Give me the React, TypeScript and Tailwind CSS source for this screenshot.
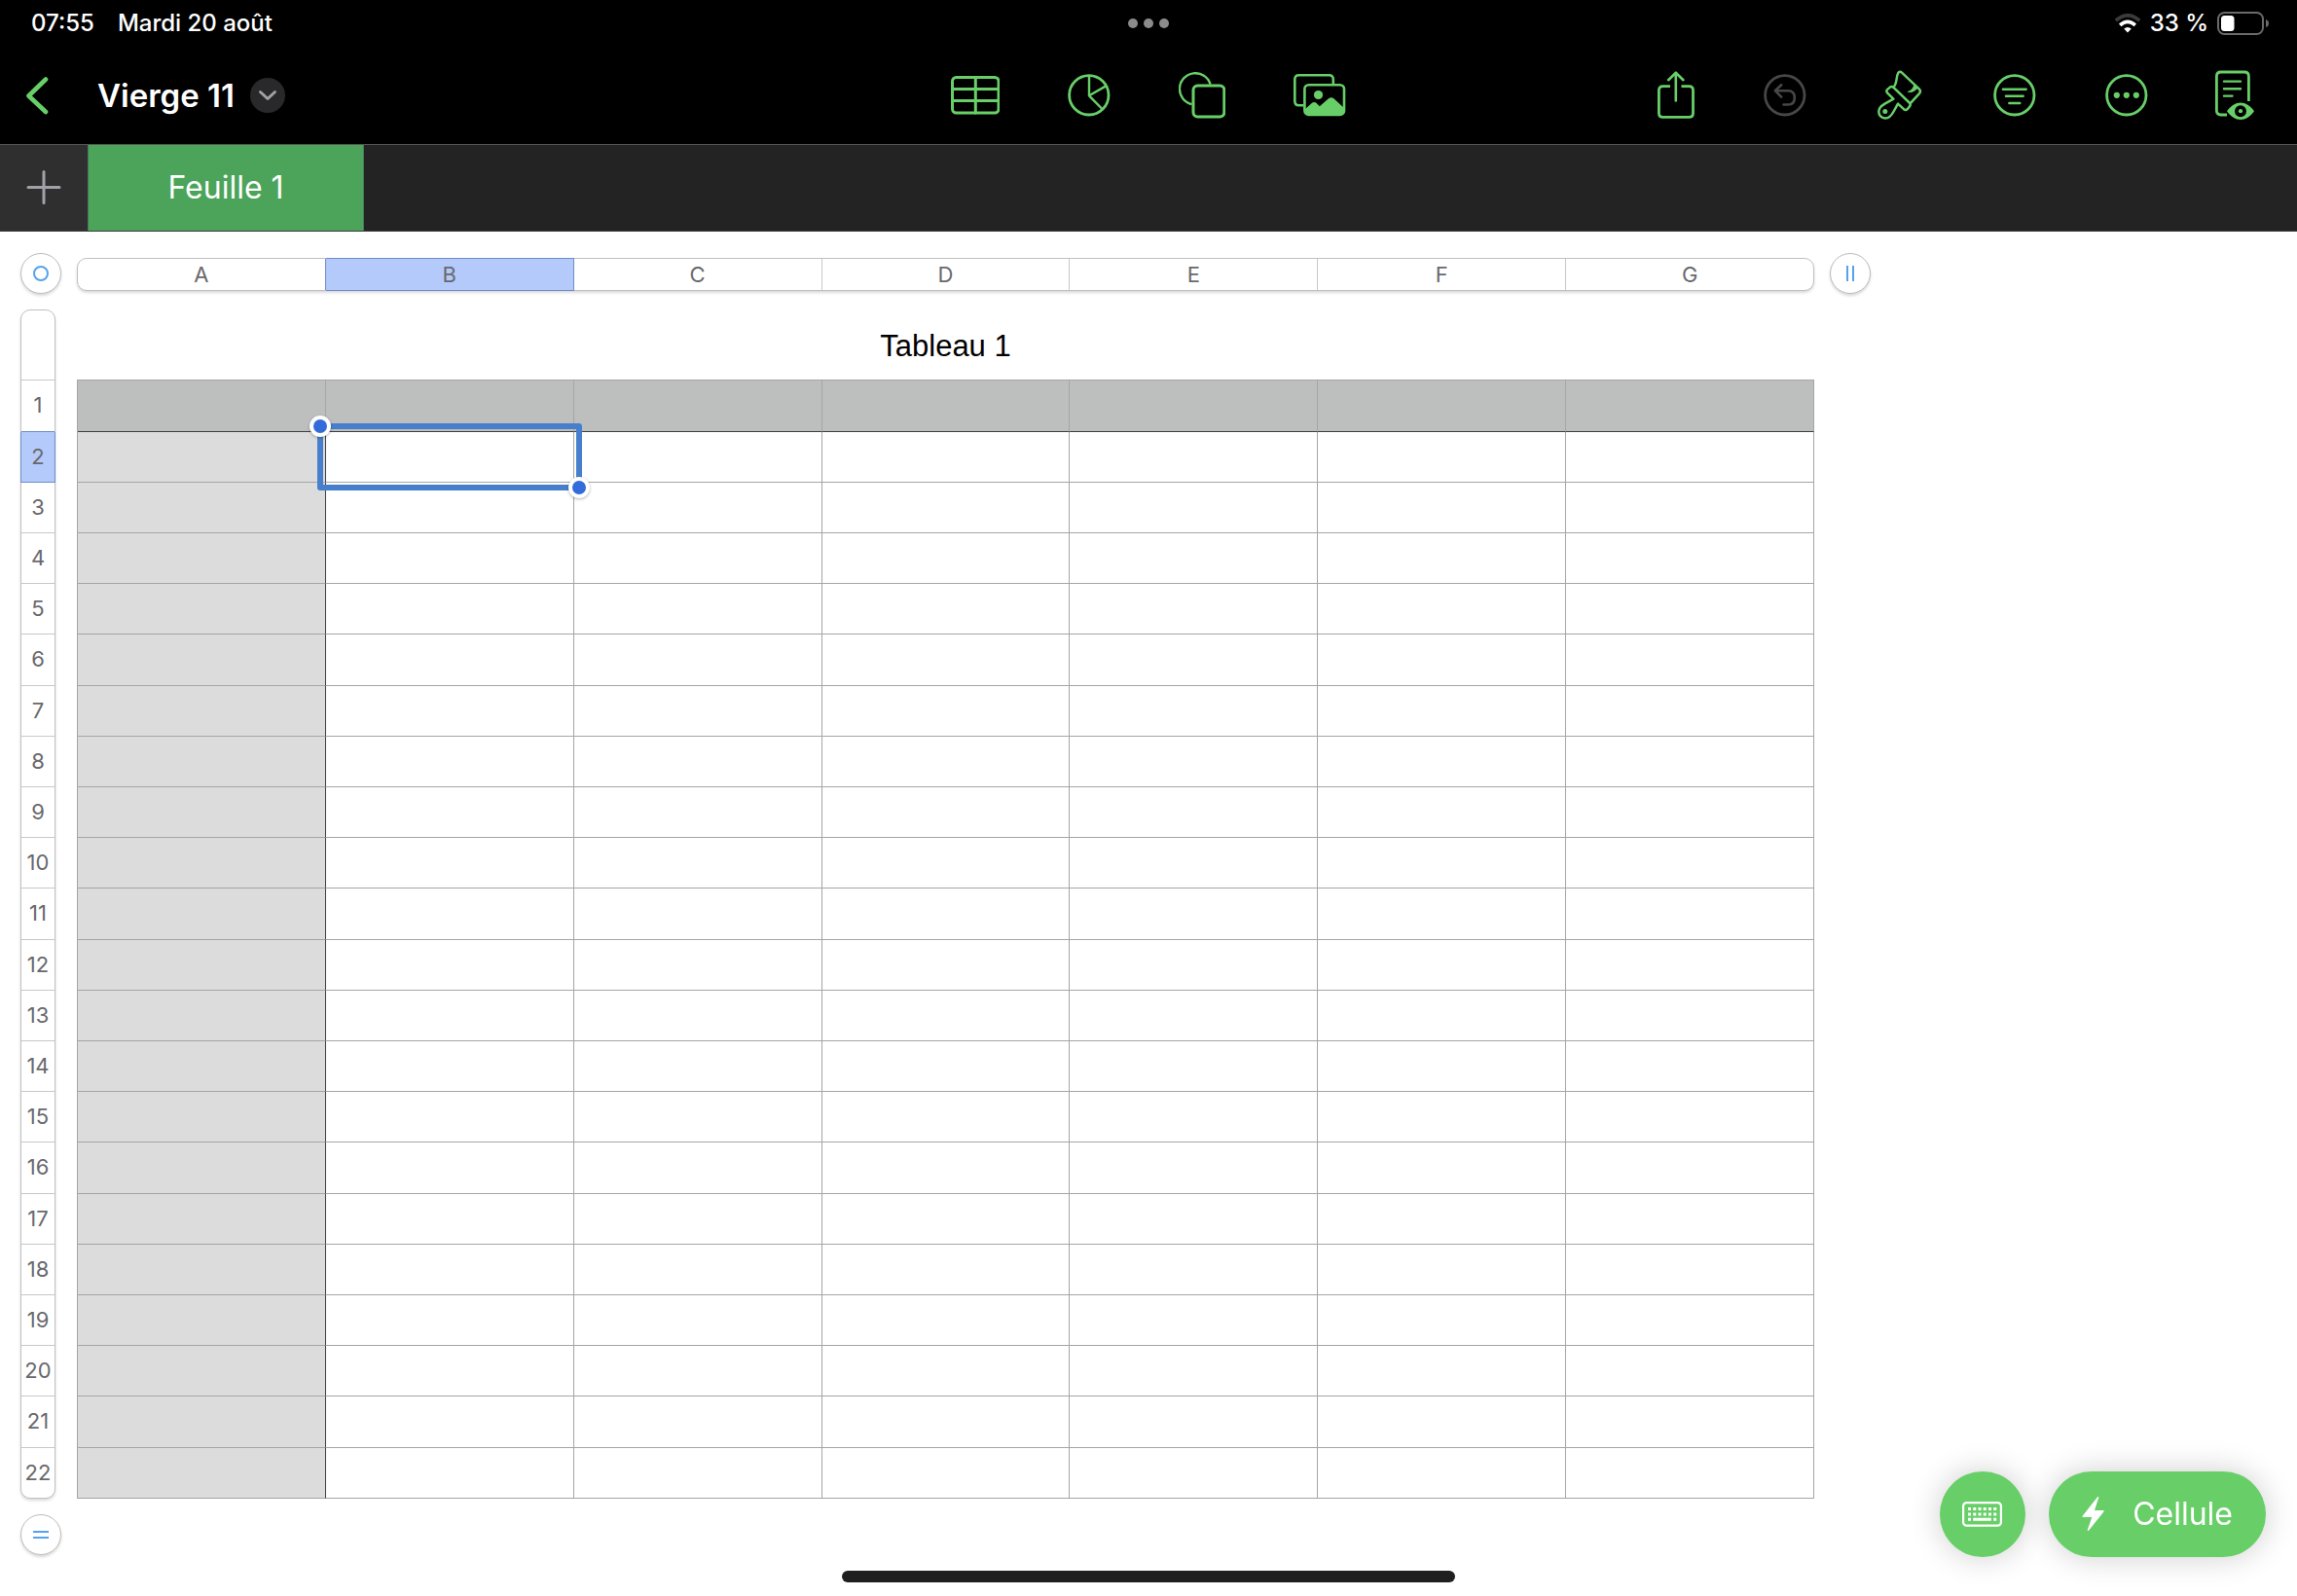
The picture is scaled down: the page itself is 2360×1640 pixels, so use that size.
import React from 'react';
import clsx from 'clsx';

const COLUMNS = ['A', 'B', 'C', 'D', 'E', 'F', 'G'];
const ROWS = Array.from({ length: 22 }, (_, i) => i + 1);
const SELECTED = { column: 'B', row: 2 };

// every fifth row takes the spare pixel, in the ruler and in the table alike
const rowHeight = (row: number) => (row % 5 === 1 ? 'h-[53px]' : 'h-[52px]');

interface IconProps {
    w: number;
    h: number;
    x?: number;
    className?: string;
    children: React.ReactNode;
}

const Icon: React.FC<IconProps> = ({ w, h, x = 0, className, children }) => (
    <svg
        width={w}
        height={h}
        viewBox={`${x} 0 ${w} ${h}`}
        fill="none"
        stroke="currentColor"
        strokeWidth={3}
        strokeLinecap="round"
        strokeLinejoin="round"
        aria-hidden="true"
        className={className}
    >
        {children}
    </svg>
);

const TableIcon = () => (
    <Icon w={50} h={40}>
        <rect x="1.5" y="1.5" width="47.5" height="36.5" rx="4" />
        <path d="M1.5 13.5H49M1.5 25.5H49M25.3 1.5V38" />
    </Icon>
);

const ChartIcon = () => (
    <Icon w={44} h={44}>
        <circle cx="21.8" cy="21.8" r="20.2" strokeWidth="2.8" />
        <path d="M22 2V22.3L38.8 12.6M22 22.3L35.4 36" strokeWidth="2.4" />
    </Icon>
);

const ShapeIcon = () => (
    <Icon w={48} h={48}>
        <path d="M32.6 12.6A16.2 16.2 0 1 0 13.6 33.2" strokeWidth="2.4" strokeLinecap="butt" />
        <rect x="15" y="14" width="31.8" height="32" rx="4.5" />
    </Icon>
);

const MediaIcon = () => (
    <Icon w={54} h={44}>
        <path d="M40.8 10V5.5Q40.8 1.3 36.6 1.3H5.5Q1.3 1.3 1.3 5.5V28Q1.3 32.2 5.5 32.2H10" strokeWidth="2.6" strokeLinecap="butt" />
        <rect x="11.4" y="11.3" width="40.6" height="30.6" rx="4.2" strokeWidth="2.6" />
        <circle cx="25.5" cy="21.5" r="4.6" fill="currentColor" stroke="none" />
        <path d="M12 36L19 29.8Q21.2 28 23.4 29.8L26.8 33.2L36 25.3Q38.7 23.2 41.4 25.3L52 35V38Q52 42 48 42H16Q12 42 12 38Z" fill="currentColor" stroke="none" />
    </Icon>
);

const ShareIcon = () => (
    <Icon w={38} h={50}>
        <path d="M13 15.6H5.5Q1.4 15.6 1.4 19.7V43.3Q1.4 47.4 5.5 47.4H32.4Q36.5 47.4 36.5 43.3V19.7Q36.5 15.6 32.4 15.6H24.5" strokeWidth="2.8" strokeLinecap="butt" />
        <path d="M18.8 30.5V2M11.2 9.2L18.8 1.7L26.4 9.2" strokeWidth="2.6" />
    </Icon>
);

const UndoIcon = () => (
    <Icon w={44} h={44}>
        <circle cx="21.8" cy="21.8" r="20.2" strokeWidth="2.8" />
        <path d="M18.2 11.2L11.8 17.2L18.2 23.6M12 17.2H25Q31.8 17.2 31.8 24.4Q31.8 31.5 25 31.5H20.5" strokeWidth="2.6" />
    </Icon>
);

const BrushIcon = () => (
    <Icon w={50} h={52} x={-2}>
        <g strokeWidth="2.5">
            <path d="M16.5 17.5C20.5 13 18.8 7.5 21.2 3Q22.8 0.6 25 2.6L43 19.6Q44.8 21.6 43.2 23.8L33.8 34.2" />
            <path d="M10 23.4Q8.6 21.4 10.2 19.9L13.2 17.4Q14.9 16.4 16.5 17.8L33.2 34Q34.2 35.6 33 37.4L30.6 40.2Q29 41.8 27 40.2L21 34.6L16.6 42.5C14.5 46.5 12 49.5 8 49.5C3.8 49.5 1.3 46.2 1.3 42.8C1.3 38.5 4 36.6 7.5 34.6L16.4 29.6Z" />
        </g>
        <circle cx="7.8" cy="42.5" r="2.5" fill="currentColor" stroke="none" />
        <path d="M37.5 13.5Q37.5 20 30.3 22.3Q36 24.8 42 18Z" fill="currentColor" stroke="none" />
    </Icon>
);

const FilterIcon = () => (
    <Icon w={44} h={44}>
        <circle cx="21.8" cy="21.8" r="20.2" strokeWidth="2.8" />
        <path d="M10 15.8H33.6M13 22.8H30.6M16.4 30H27.2" strokeWidth="2.6" />
    </Icon>
);

const MoreIcon = () => (
    <Icon w={44} h={44}>
        <circle cx="21.8" cy="21.8" r="20.2" strokeWidth="2.8" />
        <g fill="currentColor" stroke="none">
            <circle cx="11.8" cy="21.8" r="3.1" />
            <circle cx="21.8" cy="21.8" r="3.1" />
            <circle cx="31.8" cy="21.8" r="3.1" />
        </g>
    </Icon>
);

const ReadIcon = () => (
    <Icon w={36} h={52} x={2} className="overflow-visible">
        <path d="M34.4 32V6.4Q34.4 2 30 2H5.8Q1.4 2 1.4 6.4V41.6Q1.4 46 5.8 46H12" strokeWidth="2.8" strokeLinecap="butt" />
        <path d="M9 11.6H26M9 19.2H26M9 26.6H17.5" strokeWidth="2.4" />
        <path d="M12 42.2C20 30.6 32 30.6 40 42.2C32 53.8 20 53.8 12 42.2Z" fill="currentColor" stroke="none" />
        <circle cx="26" cy="42.2" r="6" fill="#000" stroke="none" />
        <circle cx="26" cy="42.2" r="2.1" fill="currentColor" stroke="none" />
    </Icon>
);

const KeyboardIcon = () => (
    <Icon w={42} h={26}>
        <rect x="1.1" y="1.1" width="38.8" height="23.6" rx="3.5" strokeWidth="2.2" />
        <g strokeWidth="3" strokeLinecap="butt">
            <path d="M6 7.5H35.3" strokeDasharray="3 2.25" />
            <path d="M6 12.9H35.3" strokeDasharray="3 2.25" />
            <path d="M6 18.2H9M11.2 18.2H29.8M32.2 18.2H35.2" />
        </g>
    </Icon>
);

const BoltIcon = () => (
    <Icon w={24} h={38}>
        <path d="M16.6 1.6L1.2 21.2H11.3L6.4 35.2L22 15.8H12Z" fill="currentColor" strokeWidth="1.4" />
    </Icon>
);

const StatusBar = () => (
    <div className="grid h-12 grid-cols-3 items-center px-7 text-2xl font-medium">
        <div className="flex gap-6 pl-1">
            <span>07:55</span>
            <span>Mardi 20 août</span>
        </div>
        <div className="flex justify-center gap-1.5">
            <span className="size-2.5 rounded-full bg-[#8b8b8b]" />
            <span className="size-2.5 rounded-full bg-[#8b8b8b]" />
            <span className="size-2.5 rounded-full bg-[#8b8b8b]" />
        </div>
        <div className="flex items-center justify-end gap-[9px]">
            <Icon w={28} h={20}>
                <path d="M1.8 7.2Q14 -3.6 26.2 7.2" stroke="#3b3b3b" strokeWidth="3.6" strokeLinecap="butt" />
                <path d="M6.2 11.8Q14 4.8 21.8 11.8" strokeWidth="3.6" strokeLinecap="butt" />
                <path d="M10.2 15.6Q14 12.4 17.8 15.6L14 19.6Z" fill="currentColor" stroke="none" />
            </Icon>
            <span>33 %</span>
            <Icon w={54} h={24}>
                <rect x="1" y="1" width="46" height="22" rx="6.5" stroke="#6a6a6a" strokeWidth="2" />
                <rect x="4" y="4" width="13.5" height="16" rx="3.5" fill="currentColor" stroke="none" />
                <path d="M50 8Q53 9 53 12Q53 15 50 16Z" fill="#6a6a6a" stroke="none" />
            </Icon>
        </div>
    </div>
);

const INSERT_TOOLS = [
    { label: 'Tableau', icon: <TableIcon /> },
    { label: 'Graphique', icon: <ChartIcon /> },
    { label: 'Forme', icon: <ShapeIcon /> },
    { label: 'Média', icon: <MediaIcon /> },
];

const DOCUMENT_TOOLS = [
    { label: 'Partager', icon: <ShareIcon /> },
    { label: 'Annuler', icon: <UndoIcon />, disabled: true },
    { label: 'Format', icon: <BrushIcon /> },
    { label: 'Organiser', icon: <FilterIcon /> },
    { label: 'Plus', icon: <MoreIcon /> },
    { label: 'Lecture', icon: <ReadIcon /> },
];

const Toolbar = () => (
    <div className="grid h-[100px] grid-cols-[1fr_auto_1fr] items-center px-[46px] text-[#68cf68]">
        <div className="-ml-5 flex items-center">
            <button aria-label="Retour">
                <Icon w={24} h={40}>
                    <path d="M21 3.5L3.5 20.5L21 37" strokeWidth="4.6" />
                </Icon>
            </button>
            <h1 className="ml-[50px] text-[33px] leading-10 font-semibold text-white">Vierge 11</h1>
            <button aria-label="Options du document" className="ml-4 flex size-9 items-center justify-center rounded-full bg-[#29292b] text-[#a1a1a7]">
                <Icon w={20} h={12}>
                    <path d="M2.5 2.5L10 9.5L17.5 2.5" />
                </Icon>
            </button>
        </div>
        <div className="flex items-center gap-[70px]">
            {INSERT_TOOLS.map((tool) => (
                <button key={tool.label} aria-label={tool.label}>
                    {tool.icon}
                </button>
            ))}
        </div>
        <div className="flex items-center justify-end gap-[71px]">
            {DOCUMENT_TOOLS.map((tool) => (
                <button key={tool.label} aria-label={tool.label} disabled={tool.disabled} className="disabled:text-[#474749]">
                    {tool.icon}
                </button>
            ))}
        </div>
    </div>
);

const SheetTabs = () => (
    <nav className="flex h-[90px] border-t border-b border-t-[#555555] border-b-[#3a3a3a] bg-[#232323]">
        <button aria-label="Ajouter une feuille" className="flex w-[90px] items-center justify-center bg-[#2f2f2f] text-[#a1a1a7]">
            <Icon w={36} h={36}>
                <path d="M2 17.5H34M18 1.5V33.5" />
            </Icon>
        </button>
        <button className="w-[284px] border-x border-[#47795a] bg-[#4ba45a] text-[32px] leading-10 text-white">Feuille 1</button>
    </nav>
);

interface RoundButtonProps {
    label: string;
    children: React.ReactNode;
}

const RoundButton: React.FC<RoundButtonProps> = ({ label, children }) => (
    <button aria-label={label} className="flex size-[42px] items-center justify-center rounded-full border border-[#bdbdbd] bg-white text-[#55a2ee] shadow-[0_2px_3px_rgba(0,0,0,0.15)]">
        {children}
    </button>
);

const ColumnRuler = () => (
    <div className="flex h-[34px] rounded-[10px] border border-[#c0c0c0] bg-white shadow-[0_2px_3px_rgba(0,0,0,0.15)]">
        {COLUMNS.map((column, i) => (
            <button
                key={column}
                className={clsx(
                    'flex-1 border-r last:border-r-0',
                    column === SELECTED.column && '-my-px border-y border-[#6f8cc6] bg-[#b3cafb]',
                    column !== SELECTED.column && (COLUMNS[i + 1] === SELECTED.column ? 'border-[#6f8cc6]' : 'border-[#c8c8c8]'),
                )}
            >
                {column}
            </button>
        ))}
    </div>
);

const RowRuler = () => (
    <div className="flex w-9 flex-col rounded-[10px] border border-[#c0c0c0] bg-white shadow-[0_2px_3px_rgba(0,0,0,0.15)]">
        <div className="h-[72px] border-b border-[#c8c8c8]" />
        {ROWS.map((row) => (
            <button
                key={row}
                className={clsx(
                    'border-b pb-0.5 last:-mb-px last:border-b-0',
                    rowHeight(row),
                    row === SELECTED.row && '-mx-px border-x border-[#6f8cc6] bg-[#b3cafb]',
                    row !== SELECTED.row && (row + 1 === SELECTED.row ? 'border-[#6f8cc6]' : 'border-[#c8c8c8]'),
                )}
            >
                {row}
            </button>
        ))}
    </div>
);

const Selection = () => (
    <div className="absolute -inset-[9px] z-10 rounded-[3px] border-6 border-[#477fcd]">
        <span className="absolute -top-3.5 -left-3.5 size-[22px] rounded-full border-4 border-white bg-[#336bdb] shadow-[0_1px_3px_rgba(0,0,0,0.3)]" />
        <span className="absolute -right-3.5 -bottom-3.5 size-[22px] rounded-full border-4 border-white bg-[#336bdb] shadow-[0_1px_3px_rgba(0,0,0,0.3)]" />
    </div>
);

const DataTable = () => (
    <table className="w-full table-fixed border-separate border-spacing-0 border-t border-l border-[#a5a5a5]">
        <caption className="h-[72px] pt-1 font-['Liberation_Sans',sans-serif] text-[31px] leading-[68px] text-black">Tableau 1</caption>
        <tbody>
            {ROWS.map((row) => (
                <tr key={row} className={rowHeight(row)}>
                    {COLUMNS.map((column) => (
                        <td
                            key={column}
                            className={clsx(
                                'relative border-r border-b border-[#a5a5a5] p-0',
                                row === 1 && 'border-b-[#3f3f3f] bg-[#bdbfbe]',
                                row > 1 && column === 'A' && 'border-r-[#3f3f3f] bg-[#dcdcdc]',
                            )}
                        >
                            {row === SELECTED.row && column === SELECTED.column && <Selection />}
                        </td>
                    ))}
                </tr>
            ))}
        </tbody>
    </table>
);

export default function App() {
    return (
        <div className="min-h-screen bg-white font-['Inter','Liberation_Sans',sans-serif]">
            <header className="bg-black text-white">
                <StatusBar />
                <Toolbar />
                <SheetTabs />
            </header>

            <main className="grid grid-cols-[42px_1fr_42px] gap-4 pt-[22px] pr-[438px] pb-10 pl-[21px] text-[22px] leading-7 text-[#69696d]">
                <RoundButton label="Sélectionner le tableau">
                    <span className="size-4 rounded-full border-2 border-current" />
                </RoundButton>
                <div className="self-end pb-[3px]">
                    <ColumnRuler />
                </div>
                <RoundButton label="Ajouter une colonne">
                    <span className="h-4 w-2 border-x-2 border-current" />
                </RoundButton>

                <RowRuler />
                <DataTable />
                <span />

                <RoundButton label="Ajouter une ligne">
                    <span className="h-2 w-4 border-y-2 border-current" />
                </RoundButton>
            </main>

            <div className="fixed right-8 bottom-10 flex gap-6 text-white">
                <button aria-label="Clavier" className="flex size-22 items-center justify-center rounded-full bg-[#68cf68] shadow-[0_0_32px_rgba(0,0,0,0.2)]">
                    <KeyboardIcon />
                </button>
                <button className="flex h-22 items-center gap-7 rounded-full bg-[#68cf68] px-[34px] text-[32px] leading-10 shadow-[0_0_32px_rgba(0,0,0,0.2)]">
                    <BoltIcon />
                    Cellule
                </button>
            </div>

            <div className="fixed inset-x-0 bottom-3.5 mx-auto h-3 w-[630px] rounded-full bg-[#1f1f1f]" />
        </div>
    );
}
